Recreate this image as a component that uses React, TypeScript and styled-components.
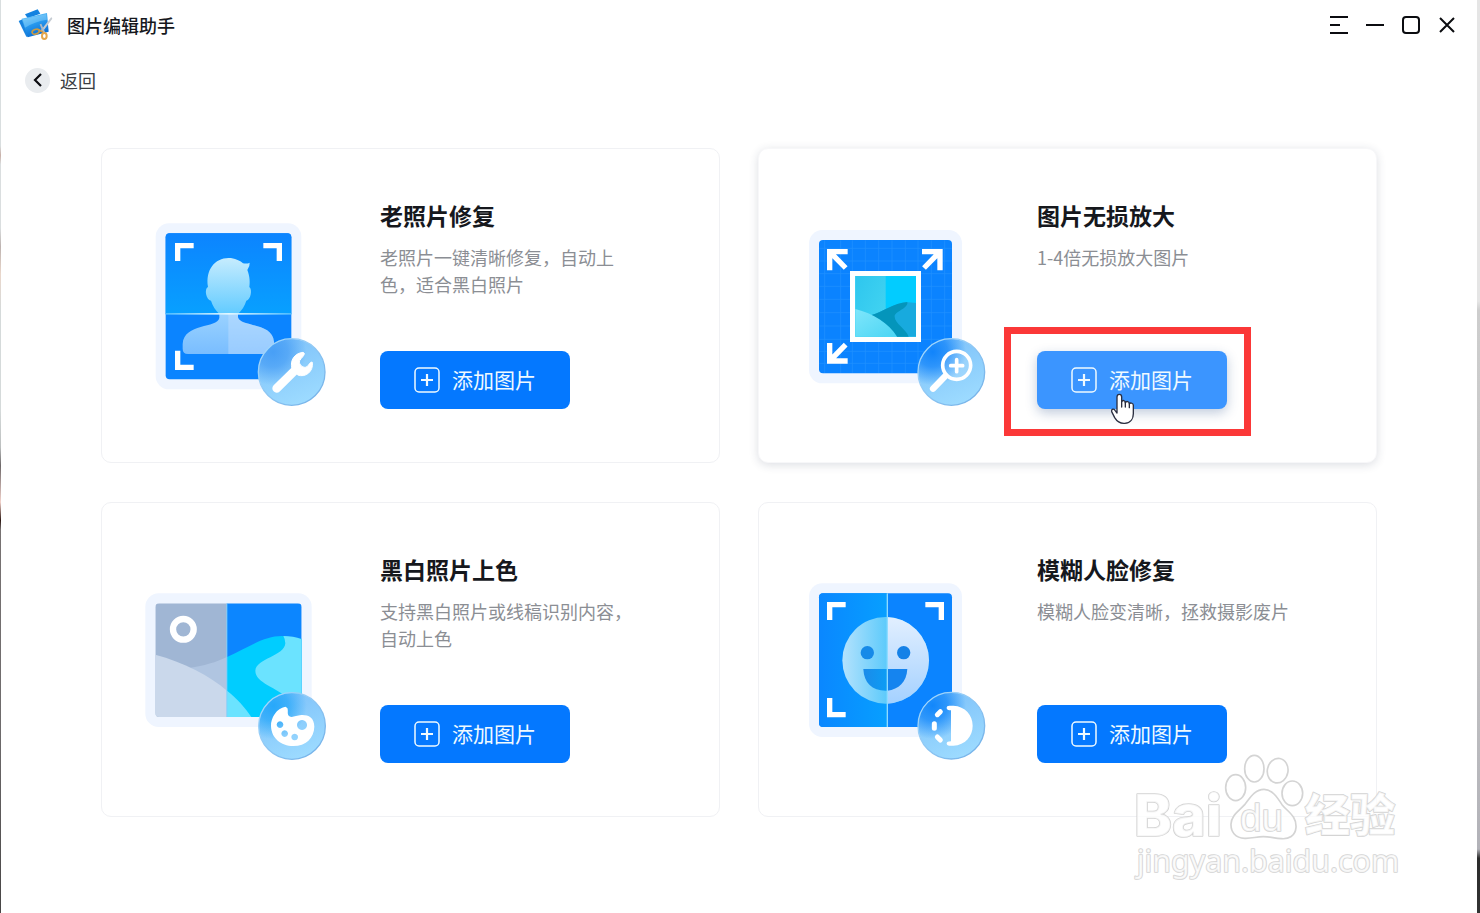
import React from "react";
import styled, { createGlobalStyle, css } from "styled-components";

const GlobalStyle = createGlobalStyle`
  *, *::before, *::after { box-sizing: border-box; }
  body {
    margin: 0;
    background: #ffffff;
    color: #16181d;
    font-family: "Noto Sans CJK SC", sans-serif;
  }
  h1, h2, p { margin: 0; }
  button { font: inherit; color: inherit; border: 0; background: none; padding: 0; cursor: pointer; }
`;

const Shell = styled.div`
  position: relative;
  display: grid;
  grid-template-columns: 1px minmax(0, 1fr) 3px;
  min-height: 100vh;
`;

const LeftEdge = styled.div`
  background: linear-gradient(
    #d9dedf 0 16%, #c9b0a8 17%, #dadedf 18% 25%, #bdb3b0 27%, #ead7cb 30%,
    #d5dada 34% 45%, #bcbfbf 49%, #6d6869 51%, #f3d3cc 55%, #2c1712 57%, #777272 58%, #6e6b6c 80%, #474545 100%
  );
`;

const RightEdge = styled.div`
  background: linear-gradient(
    #e5e5e5 0 33%, #cdcdcd 34%, #c6c6c6 65%, #b2b2b8 93%, #2b2b2b 94%, #333333 100%
  );
`;

const Window = styled.div`
  display: flex;
  flex-direction: column;
  background: #ffffff;
`;

const TitleBar = styled.header`
  display: flex;
  align-items: center;
  height: 50px;
  padding: 0 12px 0 16px;
`;

const AppTitle = styled.h1`
  margin-left: 14px;
  font-size: 18px;
  line-height: 26px;
  font-weight: 500;
`;

const WindowControls = styled.div`
  display: flex;
  margin-left: auto;
`;

const ControlButton = styled.button`
  display: grid;
  place-items: center;
  width: 36px;
  height: 36px;
`;

const BackBar = styled.nav`
  display: flex;
  align-items: center;
  height: 60px;
  padding-left: 24px;
`;

const BackButton = styled.button`
  display: flex;
  align-items: center;
  gap: 10px;
  font-size: 18px;
  line-height: 26px;
  color: #3a3d42;
`;

const BackCircle = styled.span`
  display: grid;
  place-items: center;
  width: 25px;
  height: 25px;
  border-radius: 50%;
  background: #e9ecef;
`;

const CardGrid = styled.main`
  display: grid;
  grid-template-columns: repeat(auto-fit, minmax(500px, 1fr));
  gap: 39px 38px;
  padding: 38px 100px 96px;
`;

const Card = styled.article<{ $active?: boolean }>`
  display: flex;
  gap: 40px;
  padding: 51px 38px 53px;
  border: 1px solid #f0f1f4;
  border-radius: 10px;
  background: #ffffff;
  ${(p) =>
    p.$active &&
    css`
      border-color: #f7f7f9;
      box-shadow: 0 2px 10px rgba(40, 50, 80, 0.16);
    `}
`;

const Art = styled.svg`
  flex: none;
  width: 200px;
  height: 209px;
`;

const CardBody = styled.div`
  display: flex;
  flex-direction: column;
  align-items: flex-start;
  flex: 1;
`;

const CardTitle = styled.h2`
  font-size: 23px;
  line-height: 30px;
  font-weight: 700;
`;

const CardText = styled.p`
  min-height: 54px;
  margin: 14px 0 53px;
  font-size: 18px;
  line-height: 27px;
  color: #8b8e94;
  white-space: nowrap;
`;

const ActionSlot = styled.div`
  position: relative;
`;

const AddButton = styled.button<{ $active?: boolean }>`
  display: flex;
  align-items: center;
  justify-content: center;
  gap: 12px;
  width: 190px;
  height: 58px;
  border-radius: 8px;
  background: ${(p) => (p.$active ? "#3b95ff" : "#0478ff")};
  box-shadow: ${(p) => (p.$active ? "0 4px 12px rgba(30, 70, 130, 0.28)" : "none")};
  color: #f0faff;
  font-size: 21px;
  line-height: 30px;
`;

const ButtonLabel = styled.span`
  padding-bottom: 2px;
`;

const Highlight = styled.div`
  position: absolute;
  inset: -24px -24px -27px -33px;
  border: 7px solid #fb3838;
  pointer-events: none;
`;

const Pointer = styled.svg`
  position: absolute;
  left: 73px;
  top: 42px;
  width: 24px;
  height: 32px;
  pointer-events: none;
`;

const Watermark = styled.svg`
  position: absolute;
  right: 70px;
  bottom: 23px;
  width: 290px;
  height: 150px;
  pointer-events: none;
`;

const AppLogo = () => (
  <svg width="36" height="34" viewBox="48 27 108 102" aria-hidden="true">
    <defs>
      <linearGradient id="logoFront" x1="0" y1="0" x2="0.4" y2="1">
        <stop offset="0" stopColor="#7fd2fb" />
        <stop offset="0.5" stopColor="#2a9df0" />
        <stop offset="1" stopColor="#0b6fd6" />
      </linearGradient>
    </defs>
    <path d="M72 46L110 31L118 44L80 58Z" fill="#1382e0" />
    <path d="M53 66L66 60L84 112L76 113Z" fill="#1a84df" />
    <path d="M62 59L138 42L143 98L80 115Z" fill="url(#logoFront)" />
    <path d="M65 61L136 45L138 62Q104 66 72 86Z" fill="#a5defc" opacity="0.4" />
    <path d="M151 54L154 59L124 99L118 96Z" fill="#c5cbd2" />
    <path d="M116 76L121 74L133 101L126 102Z" fill="#aeb8c2" />
    <ellipse cx="104" cy="98" rx="11" ry="7" transform="rotate(-18 104 98)" fill="none" stroke="#c99a45" strokeWidth="5" />
    <ellipse cx="130" cy="111" rx="7" ry="9" fill="none" stroke="#e5a64a" strokeWidth="6" />
    <path d="M113 92L126 99" stroke="#d29b47" strokeWidth="5" />
  </svg>
);

const PlusBox = () => (
  <svg width="26" height="26" viewBox="0 0 26 26" fill="none" stroke="currentColor" aria-hidden="true">
    <rect x="1" y="1" width="24" height="24" rx="4" strokeWidth="1.5" />
    <path d="M13 7v12M7 13h12" strokeWidth="2.2" />
  </svg>
);

type FrameProps = { x: number; y: number; w: number; h: number; children?: React.ReactNode };

const Frame = ({ x, y, w, h, children }: FrameProps) => (
  <>
    <rect x={x - 30} y={y - 30} width={w + 60} height={h + 60} rx="40" fill="#eff5ff" />
    {children}
  </>
);

const Corners = ({ l, t, r, b }: { l: number; t: number; r: number; b: number }) => (
  <path
    d={`M${l + 8} ${t + 54}V${t + 8}H${l + 56} M${r - 56} ${t + 8}H${r - 8}V${t + 54} M${l + 8} ${b - 58}V${b - 8}H${l + 56}`}
    fill="none"
    stroke="#ffffff"
    strokeWidth="16"
  />
);

type BadgeProps = { id: string; cx: number; cy: number; dark: string; children: React.ReactNode };

const Badge = ({ id, cx, cy, dark, children }: BadgeProps) => (
  <g transform={`translate(${cx} ${cy})`}>
    <defs>
      <linearGradient id={`${id}Base`} x1="0.2" y1="0" x2="0.6" y2="1">
        <stop offset="0" stopColor="#7cc0f9" />
        <stop offset="1" stopColor="#9ddbff" />
      </linearGradient>
      <radialGradient id={`${id}Glow`} cx="0.22" cy="0.2" r="0.5">
        <stop offset="0" stopColor={dark} />
        <stop offset="0.45" stopColor={dark} stopOpacity="0.75" />
        <stop offset="1" stopColor={dark} stopOpacity="0" />
      </radialGradient>
      <linearGradient id={`${id}Rim`} x1="0" y1="0" x2="1" y2="1">
        <stop offset="0" stopColor="#a8dcff" />
        <stop offset="1" stopColor="#70aee6" />
      </linearGradient>
    </defs>
    <circle r="100" fill={`url(#${id}Base)`} />
    <circle r="100" fill={`url(#${id}Glow)`} />
    <circle r="100" fill="none" stroke={`url(#${id}Rim)`} strokeWidth="4" />
    {children}
  </g>
);

const RestoreArt = () => (
  <Art viewBox="0 -30 600 627" aria-hidden="true">
    <defs>
      <linearGradient id="restoreTop" x1="0" y1="0" x2="0" y2="1">
        <stop offset="0" stopColor="#0c84ff" />
        <stop offset="1" stopColor="#08a0ff" />
      </linearGradient>
      <linearGradient id="restoreHead" x1="0" y1="0" x2="0" y2="1">
        <stop offset="0" stopColor="#c6ecfe" />
        <stop offset="1" stopColor="#62cbff" />
      </linearGradient>
      <linearGradient id="restoreBody" x1="0" y1="0" x2="0" y2="1">
        <stop offset="0" stopColor="#9ad2ff" />
        <stop offset="1" stopColor="#79bdff" />
      </linearGradient>
      <linearGradient id="restoreLine" x1="0" y1="0" x2="1" y2="0">
        <stop offset="0" stopColor="#4dbcff" />
        <stop offset="0.5" stopColor="#e4f8ff" />
        <stop offset="1" stopColor="#4dbcff" />
      </linearGradient>
      <clipPath id="restoreRight"><rect x="265" y="312" width="150" height="130" /></clipPath>
    </defs>
    <Frame x={77} y={70} w={377} h={438}>
      <rect x="77" y="70" width="377" height="438" rx="12" fill="#0b84ff" />
      <path d="M77 312V82a12 12 0 0 1 12-12H442a12 12 0 0 1 12 12V312Z" fill="url(#restoreTop)" />
    </Frame>
    <path
      d="M238 312H294V322C300 352 398 336 402 395V416Q402 432 386 432H144Q128 432 128 416V402C132 338 232 356 238 324Z"
      fill="url(#restoreBody)"
    />
    <path
      d="M238 312H294V322C300 352 398 336 402 395V416Q402 432 386 432H144Z"
      fill="#c8e2ff"
      opacity="0.4"
      clipPath="url(#restoreRight)"
    />
    <path
      d="M238 312C226 300 218 288 213 272C198 270 192 236 204 231C196 180 224 144 266 144C284 144 300 152 309 160Q322 162 329 158Q330 168 322 180C330 200 330 220 328 231C338 238 332 270 319 272C314 288 306 300 294 312Z"
      fill="url(#restoreHead)"
    />
    <rect x="77" y="309" width="377" height="5" fill="url(#restoreLine)" />
    <Corners l={105} t={99} r={426} b={480} />
    <Badge id="wrench" cx={455} cy={486} dark="#489ff6">
      <path d="M-45 49L14 -9" stroke="#ffffff" strokeWidth="26" strokeLinecap="round" />
      <path
        d="M34 -59C8 -56 -6 -34 1 -10L18 9C42 18 66 -2 62 -29C56 -32 54 -24 46 -16C36 -9 20 -22 24 -34C30 -44 38 -48 38 -56Z"
        fill="#ffffff"
        stroke="#ffffff"
        strokeWidth="3"
        strokeLinejoin="round"
      />
    </Badge>
  </Art>
);

const EnlargeArt = () => (
  <Art viewBox="-9 -30 600 627" aria-hidden="true">
    <defs>
      <linearGradient id="photoLeft" x1="0" y1="0" x2="1" y2="1">
        <stop offset="0" stopColor="#2ec6ee" />
        <stop offset="1" stopColor="#46d6f2" />
      </linearGradient>
      <linearGradient id="photoHill" x1="0" y1="0" x2="1" y2="1">
        <stop offset="0" stopColor="#7fe6fb" />
        <stop offset="1" stopColor="#4bd5f4" />
      </linearGradient>
    </defs>
    <Frame x={57} y={90} w={399} h={400}>
      <rect x="57" y="90" width="399" height="400" rx="12" fill="#0b83ff" />
      <path
        d="M74 91V489M122 91V489M157 91V489M196 91V489M236 91V489M276 91V489M316 91V489M354 91V489M394 91V489M434 91V489M58 115H455M58 153H455M58 191H455M58 229H455M58 268H455M58 308H455M58 348H455M58 388H455M58 424H455M58 460H455"
        stroke="#3ba3ff"
        strokeWidth="2.5"
        opacity="0.4"
      />
    </Frame>
    <rect x="150" y="183" width="213" height="213" fill="#ffffff" />
    <rect x="166" y="198" width="182" height="182" fill="#02ccff" />
    <rect x="166" y="198" width="91" height="182" fill="url(#photoLeft)" />
    <path d="M213 316C250 306 280 278 325 277L348 279V380H291Z" fill="#18aade" />
    <path d="M213 316C250 306 280 278 322 276C326 296 282 304 284 320C284 340 318 356 326 380H291C270 350 246 330 213 316Z" fill="#0495bb" />
    <path d="M166 297C220 310 266 340 291 380H166Z" fill="url(#photoHill)" />
    <g fill="none" stroke="#ffffff" strokeWidth="16">
      <path d="M89 181V125H143M91 127L137 174" />
      <path d="M366 125H420V181M418 127L372 174" />
      <path d="M89 399V453H143M91 451L137 404" />
    </g>
    <Badge id="magnify" cx={454} cy={486} dark="#1184fb">
      <circle cx="16" cy="-20" r="42" fill="#ffffff" fillOpacity="0.12" stroke="#ffffff" strokeWidth="11" />
      <path d="M-55 50L-18 12" stroke="#ffffff" strokeWidth="19" strokeLinecap="round" />
      <path d="M16 -37V-1M-2 -19H34" stroke="#ffffff" strokeWidth="11" strokeLinecap="round" />
    </Badge>
  </Art>
);

const ColorizeArt = () => (
  <Art viewBox="30 -78 600 627" aria-hidden="true">
    <defs>
      <clipPath id="colorizeClip"><rect x="76" y="70" width="439" height="341" rx="12" /></clipPath>
    </defs>
    <Frame x={76} y={70} w={439} h={341}>
      <g clipPath="url(#colorizeClip)">
        <rect x="76" y="70" width="215" height="341" fill="#a0b6d4" />
        <rect x="291" y="70" width="224" height="341" fill="#0c86ff" />
        <path d="M180 263C220 258 260 246 291 231V340Z" fill="#b0c5e1" />
        <path d="M76 224C160 246 240 288 291 332V411H76Z" fill="#cad8eb" />
        <path d="M291 231C350 205 400 168 455 168L515 176V411H291Z" fill="#00cdff" />
        <path d="M460 168Q490 168 515 178V411L480 360C440 320 376 310 376 272C378 236 464 228 466 190Q466 178 460 168Z" fill="#6be3ff" />
        <path d="M291 332C322 356 346 384 364 411H291Z" fill="#6be3ff" />
        <rect x="289" y="70" width="3" height="341" fill="#7fd0fb" />
      </g>
    </Frame>
    <circle cx="160" cy="148" r="31" fill="none" stroke="#ffffff" strokeWidth="19" />
    <Badge id="palette" cx={486} cy={438} dark="#27a8fa">
      <path
        fillRule="evenodd"
        fill="#ffffff"
        d="M-20 -58C-46 -54 -64 -24 -63 0C-62 36 -34 60 4 60C42 60 66 36 67 2C67 -26 48 -34 28 -33C12 -32 2 -24 -8 -29C-16 -36 -10 -44 -14 -54ZM-36 -14a10 10 0 1 0 .1 0ZM-22 13a10 10 0 1 0 .1 0ZM8 23a10 10 0 1 0 .1 0ZM30 -18a15 15 0 1 0 .1 0Z"
      />
    </Badge>
  </Art>
);

const FaceArt = () => (
  <Art viewBox="-9 -48 600 627" aria-hidden="true">
    <defs>
      <linearGradient id="faceBack" x1="0" y1="0" x2="1" y2="0">
        <stop offset="0" stopColor="#0a87ff" />
        <stop offset="1" stopColor="#079fff" />
      </linearGradient>
      <linearGradient id="faceLeft" x1="0" y1="0" x2="1" y2="0">
        <stop offset="0" stopColor="#b4e2fd" />
        <stop offset="0.5" stopColor="#5fcbfb" />
      </linearGradient>
      <linearGradient id="faceRight" x1="0" y1="0" x2="0" y2="1">
        <stop offset="0" stopColor="#e2efff" />
        <stop offset="1" stopColor="#a4d1ff" />
      </linearGradient>
      <linearGradient id="faceMouth" x1="0" y1="0" x2="1" y2="0">
        <stop offset="0" stopColor="#1b8be9" />
        <stop offset="1" stopColor="#0c9df5" />
      </linearGradient>
      <clipPath id="faceSplit"><rect x="262" y="130" width="140" height="280" /></clipPath>
    </defs>
    <Frame x={57} y={70} w={399} h={401}>
      <rect x="57" y="70" width="399" height="401" rx="12" fill="#0b84ff" />
      <path d="M262 70V471H69a12 12 0 0 1-12-12V82a12 12 0 0 1 12-12Z" fill="url(#faceBack)" />
    </Frame>
    <circle cx="257" cy="271" r="130" fill="url(#faceLeft)" />
    <circle cx="257" cy="271" r="130" fill="url(#faceRight)" clipPath="url(#faceSplit)" />
    <circle cx="202" cy="248" r="20" fill="#168ae8" />
    <circle cx="311" cy="248" r="20" fill="#1581e7" />
    <path d="M190 297H262V362C218 364 192 340 190 297Z" fill="url(#faceMouth)" />
    <path d="M262 297H322C320 336 296 358 262 362Z" fill="#1584ef" />
    <rect x="260" y="70" width="4" height="401" fill="#8fdcff" />
    <Corners l={81} t={96} r={432} b={442} />
    <Badge id="contrast" cx={454} cy={467} dark="#1287fb">
      <path d="M-6 -60H6C42 -58 64 -32 64 0C64 32 42 58 6 60H-6Q-14 60 -14 53Q-14 47 -1 47V-46Q-14 -46 -14 -53Q-14 -60 -6 -60Z" fill="#ffffff" />
      <path d="M-33 -42L-42 -33M-51 -6V8M-42 34L-33 43" stroke="#ffffff" strokeWidth="15" strokeLinecap="round" />
    </Badge>
  </Art>
);

const HandPointer = () => (
  <Pointer viewBox="0 0 72 96" aria-hidden="true">
    <path
      d="M28 4C33 4 35 8 35 12V26C38 20 46 22 46 29C49 23 58 25 58 32C62 28 70 31 70 37V62C70 74 64 90 44 91C28 92 20 84 14 74L5 56C3 48 11 46 15 52L21 60V12C21 8 23 4 28 4Z"
      fill="#ffffff"
      stroke="#2a2e40"
      strokeWidth="4"
      strokeLinejoin="round"
    />
    <path d="M35 24V42M46 28V42M58 32V44" stroke="#2a2e40" strokeWidth="4" strokeLinecap="round" />
  </Pointer>
);

const BaiduMark = () => (
  <Watermark viewBox="0 0 870 450" role="img" aria-label="Baidu 经验 jingyan.baidu.com">
    <g fill="#ffffff" fillOpacity="0.75" stroke="#d4d4d4" strokeWidth="5" strokeLinejoin="round">
      <ellipse cx="347" cy="143" rx="30" ry="39" />
      <ellipse cx="403" cy="86" rx="29" ry="40" />
      <ellipse cx="473" cy="92" rx="31" ry="37" transform="rotate(10 473 92)" />
      <ellipse cx="517" cy="160" rx="31" ry="37" />
      <path d="M432 148C456 148 472 172 486 194C504 216 530 228 528 262C526 288 506 298 484 296C460 294 450 290 430 290C408 290 396 296 374 295C346 294 332 276 333 252C334 226 356 214 374 194C390 174 404 148 432 148Z" />
      <g paintOrder="stroke">
        <text x="42" y="289" fontFamily="Inter, sans-serif" fontWeight="800" fontSize="172">Bai</text>
        <text x="360" y="272" fontFamily="Liberation Sans, sans-serif" fontSize="116">du</text>
        <text x="554" y="276" fontFamily="Noto Sans CJK SC, sans-serif" fontWeight="900" fontSize="136">经验</text>
        <text x="50" y="395" fontFamily="Noto Sans, sans-serif" fontSize="91">jingyan.baidu.com</text>
      </g>
    </g>
  </Watermark>
);

type Feature = {
  title: string;
  lines: string[];
  Picture: () => React.ReactElement;
  active?: boolean;
};

const features: Feature[] = [
  { title: "老照片修复", lines: ["老照片一键清晰修复，自动上", "色，适合黑白照片"], Picture: RestoreArt },
  { title: "图片无损放大", lines: ["1-4倍无损放大图片"], Picture: EnlargeArt, active: true },
  { title: "黑白照片上色", lines: ["支持黑白照片或线稿识别内容，", "自动上色"], Picture: ColorizeArt },
  { title: "模糊人脸修复", lines: ["模糊人脸变清晰，拯救摄影废片"], Picture: FaceArt },
];

const controls = [
  { label: "菜单", path: "M0 1h18M0 9h10M0 17h18" },
  { label: "最小化", path: "M0 9h18" },
  { label: "最大化", path: "M4 1h10a3 3 0 0 1 3 3v10a3 3 0 0 1-3 3H4a3 3 0 0 1-3-3V4a3 3 0 0 1 3-3z" },
  { label: "关闭", path: "M2 2l14 14M16 2L2 16" },
];

export default function App() {
  return (
    <Shell>
      <GlobalStyle />
      <LeftEdge />
      <Window>
        <TitleBar>
          <AppLogo />
          <AppTitle>图片编辑助手</AppTitle>
          <WindowControls>
            {controls.map((c) => (
              <ControlButton key={c.label} type="button" aria-label={c.label}>
                <svg width="18" height="18" viewBox="0 0 18 18" fill="none" stroke="#0b0c10" strokeWidth="2">
                  <path d={c.path} />
                </svg>
              </ControlButton>
            ))}
          </WindowControls>
        </TitleBar>
        <BackBar>
          <BackButton type="button">
            <BackCircle>
              <svg width="9" height="14" viewBox="0 0 9 14" fill="none" stroke="#0b0c10" strokeWidth="2.2">
                <path d="M8 1L2 7l6 6" />
              </svg>
            </BackCircle>
            返回
          </BackButton>
        </BackBar>
        <CardGrid>
          {features.map(({ title, lines, Picture, active }) => (
            <Card key={title} $active={active}>
              <Picture />
              <CardBody>
                <CardTitle>{title}</CardTitle>
                <CardText>
                  {lines.map((line, i) => (
                    <React.Fragment key={line}>
                      {i > 0 && <br />}
                      {line}
                    </React.Fragment>
                  ))}
                </CardText>
                <ActionSlot>
                  <AddButton type="button" $active={active}>
                    <PlusBox />
                    <ButtonLabel>添加图片</ButtonLabel>
                  </AddButton>
                  {active && (
                    <>
                      <Highlight />
                      <HandPointer />
                    </>
                  )}
                </ActionSlot>
              </CardBody>
            </Card>
          ))}
        </CardGrid>
      </Window>
      <RightEdge />
      <BaiduMark />
    </Shell>
  );
}
